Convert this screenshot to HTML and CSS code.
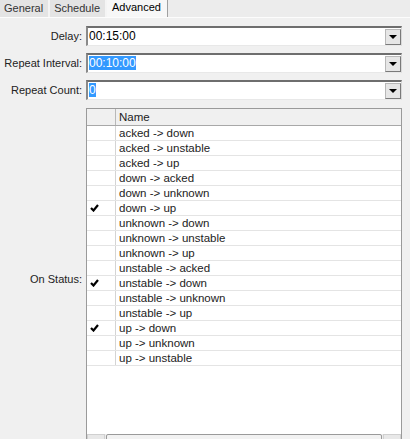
FILE: index.html
```html
<!DOCTYPE html>
<html lang="en">
<head>
    <meta charset="UTF-8">
    <title>Advanced</title>
    <link rel="stylesheet" href="styles.css">
</head>
<body>
    <div class="tabs">
        <div class="tab">General</div>
        <div class="tab">Schedule</div>
        <div class="tab active">Advanced</div>
    </div>

    <div class="panel">
        <label class="field-label">Delay:</label>
        <div class="combo">
            <span class="combo-text">00:15:00</span>
            <span class="combo-btn"><span class="arrow"></span></span>
        </div>

        <label class="field-label">Repeat Interval:</label>
        <div class="combo">
            <span class="combo-text"><span class="sel">00:10:00</span></span>
            <span class="combo-btn"><span class="arrow"></span></span>
        </div>

        <label class="field-label">Repeat Count:</label>
        <div class="combo">
            <span class="combo-text"><span class="sel">0</span></span>
            <span class="combo-btn"><span class="arrow"></span></span>
        </div>

        <label class="field-label status-label">On Status:</label>
        <div class="listview">
            <div class="lv-header">
                <div class="lv-check"></div>
                <div class="lv-name">Name</div>
            </div>
            <div id="rows"></div>
            <div class="hscroll">
                <div class="sb-btn"></div>
                <div class="sb-thumb"></div>
                <div class="sb-btn"></div>
            </div>
        </div>
    </div>

    <script>
        const statuses = [
            ['acked -> down', false],
            ['acked -> unstable', false],
            ['acked -> up', false],
            ['down -> acked', false],
            ['down -> unknown', false],
            ['down -> up', true],
            ['unknown -> down', false],
            ['unknown -> unstable', false],
            ['unknown -> up', false],
            ['unstable -> acked', false],
            ['unstable -> down', true],
            ['unstable -> unknown', false],
            ['unstable -> up', false],
            ['up -> down', true],
            ['up -> unknown', false],
            ['up -> unstable', false]
        ];

        const check = '<svg width="9" height="8" viewBox="0 0 9 8"><path d="M1 4 L3.5 6.5 L8 1" fill="none" stroke="#000" stroke-width="2.2"/></svg>';

        const rowsEl = document.getElementById('rows');
        statuses.forEach(([name, on]) => {
            const row = document.createElement('div');
            row.className = 'lv-row';
            row.innerHTML = `
                <div class="lv-check">${on ? check : ''}</div>
                <div class="lv-name">${name.replace('>', '&gt;')}</div>
            `;
            rowsEl.appendChild(row);
        });
    </script>
</body>
</html>
```

FILE: styles.css
```css
body {
    margin: 0;
    background: #f0f0f0;
    font-family: 'Liberation Sans', Arial, sans-serif;
    font-size: 11px;
    color: #000;
    overflow: hidden;
    height: 439px;
}

.tabs {
    display: flex;
    height: 17px;
    background: #ececec;
    border-bottom: 1px solid #fcfcfc;
}

.tab {
    padding: 1px 5px 0 4px;
    line-height: 15px;
    color: #333;
    background: #e4e4e4;
    border-right: 2px solid #f4f4f4;
}

.tab.active {
    background: #f7f7f7;
    color: #000;
    padding: 0 6px 0 5px;
    margin-top: -1px;
    line-height: 17px;
    border-right: 1px solid #a0a0a0;
}

.panel {
    display: grid;
    grid-template-columns: 82px 316px;
    column-gap: 4px;
    row-gap: 7px;
    padding: 8px 8px 0 0;
}

.field-label {
    text-align: right;
    line-height: 20px;
    color: #222;
    white-space: nowrap;
}

.status-label {
    align-self: start;
    margin-top: 162px;
}

.combo {
    height: 20px;
    box-sizing: border-box;
    background: #fff;
    border-top: 2px solid #6e6e6e;
    border-left: 2px solid #8a8a8a;
    border-right: 1px solid #d8d8d8;
    border-bottom: 1px solid #e8e8e8;
    display: flex;
    align-items: center;
    justify-content: space-between;
}

.combo-text {
    padding-left: 1px;
    font-size: 12px;
    line-height: 15px;
}

.sel {
    background: #3399ff;
    color: #fff;
}

.combo-btn {
    width: 16px;
    height: 16px;
    box-sizing: border-box;
    background: #e6e6e6;
    border: 1px solid #b8b8b8;
    border-right-color: #7a7a7a;
    border-bottom-color: #7a7a7a;
    display: flex;
    align-items: center;
    justify-content: center;
}

.arrow {
    width: 0;
    height: 0;
    border-left: 4px solid transparent;
    border-right: 4px solid transparent;
    border-top: 4px solid #000;
    margin-top: 1px;
}

.listview {
    position: relative;
    height: 331px;
    margin-top: 1px;
    background: #fff;
    border: 1px solid #9a9a9a;
    border-bottom: none;
    box-sizing: border-box;
    overflow: hidden;
}

.lv-header {
    display: flex;
    height: 16px;
    background: #f0f0f0;
    border-bottom: 1px solid #a8a8a8;
}

.lv-row {
    display: flex;
    height: 15px;
    border-bottom: 1px solid #e4e4e4;
    box-sizing: border-box;
}

.lv-check {
    width: 29px;
    border-right: 1px solid #d4d4d4;
    display: flex;
    align-items: center;
    justify-content: center;
    padding-right: 13px;
    box-sizing: border-box;
}

.lv-header .lv-check {
    border-right-color: #b8b8b8;
}

.lv-name {
    padding-left: 3px;
    font-size: 11.5px;
    line-height: 15px;
    color: #222;
}

.lv-header .lv-name {
    line-height: 16px;
}

/* scrollbar along the bottom edge, mostly cut off by the window */
.hscroll {
    position: absolute;
    left: 0;
    right: 0;
    top: 325px;
    height: 17px;
    display: flex;
    background: #ececec;
}

.sb-btn {
    width: 18px;
    background: #e8e8e8;
    border: 1px solid #d0d0d0;
    box-sizing: border-box;
}

.sb-thumb {
    flex: 1;
    margin: 0 1px;
    background: #f2f2f2;
    border: 1px solid #9a9a9a;
    border-radius: 2px;
}
```
